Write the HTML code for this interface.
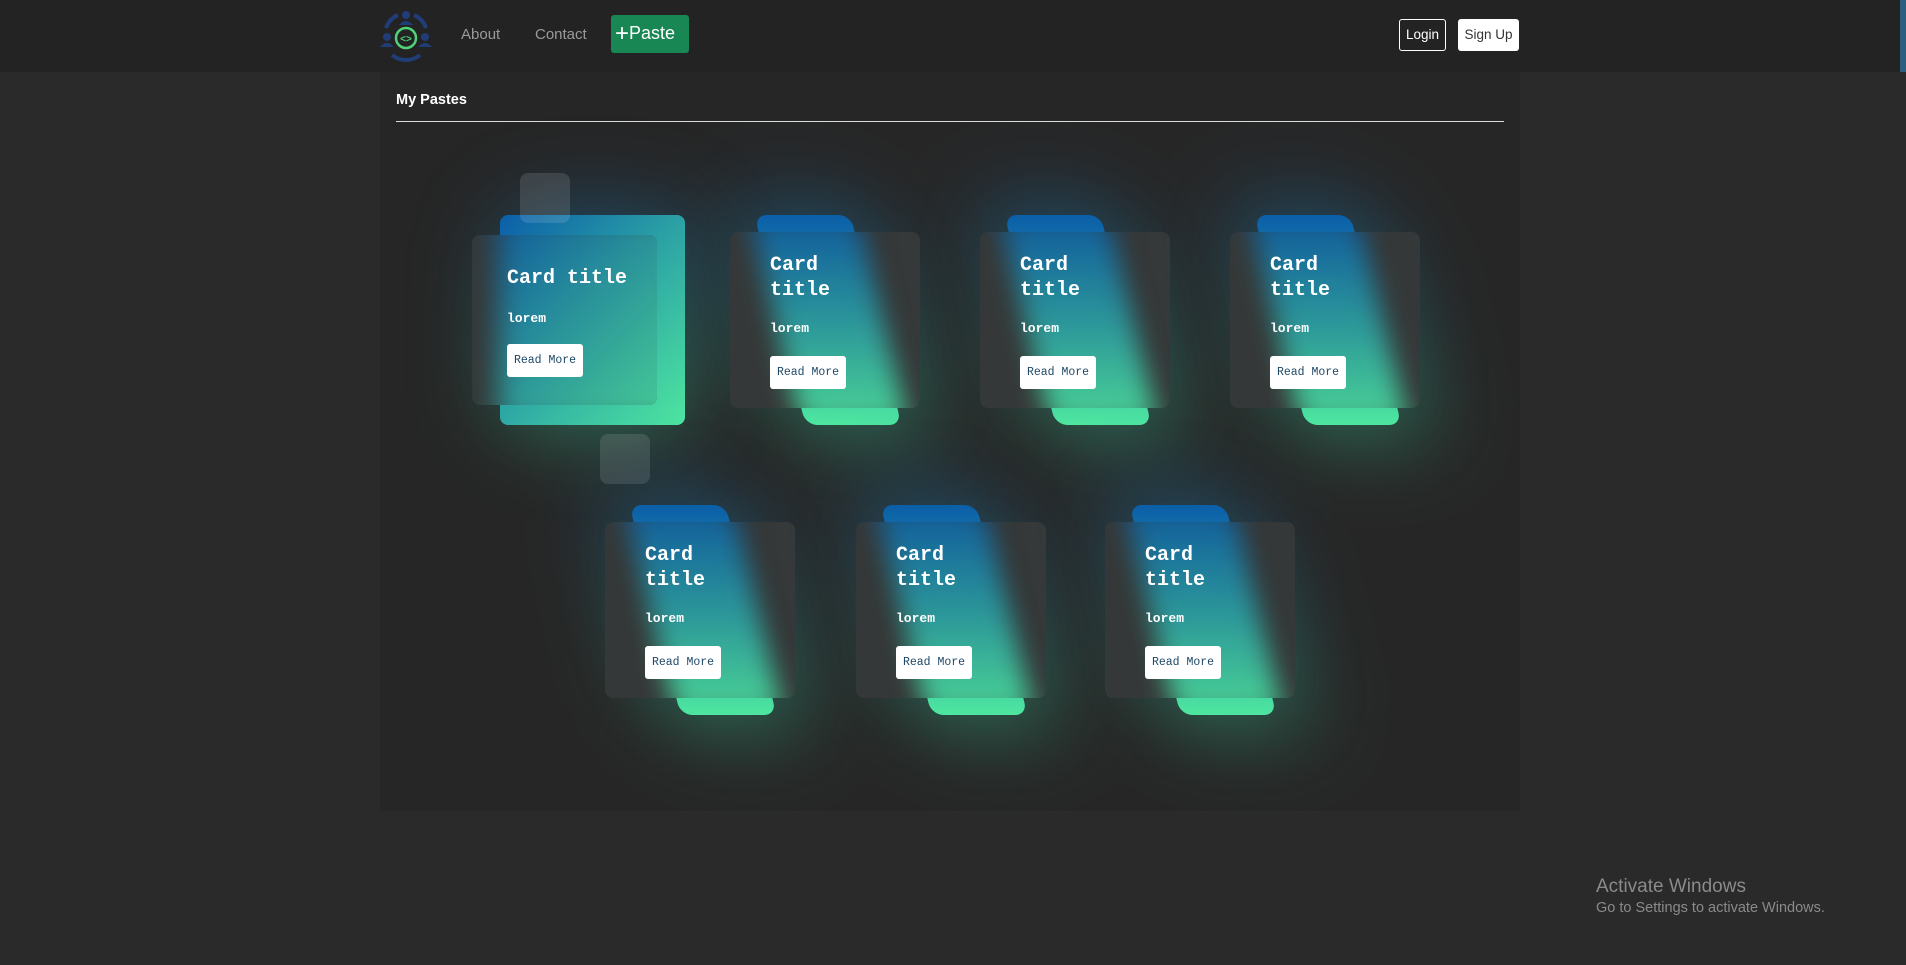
<!DOCTYPE html>
<html><head><meta charset="utf-8">
<style>
*{margin:0;padding:0;box-sizing:border-box}
html,body{width:1906px;height:965px;overflow:hidden;background:#2a2a2a;font-family:"Liberation Sans",sans-serif}
.hdr{position:absolute;left:0;top:0;width:1906px;height:72px;background:#232323}
.main{position:absolute;left:380px;top:72px;width:1140px;height:739px;background:#262626}
.nav{position:absolute;top:26px;color:#9a9a9a;font-size:15px}
.paste{position:absolute;left:611px;top:15px;width:78px;height:38px;background:#198754;border-radius:3px;color:#fff;font-size:18px;line-height:36px;padding-left:4px}
.login{position:absolute;left:1399px;top:19px;width:47px;height:32px;border:1px solid #fff;border-radius:3px;color:#fff;font-size:13.5px;line-height:30px;text-align:center}
.signup{position:absolute;left:1458px;top:19px;width:61px;height:32px;background:#fff;border-radius:3px;color:#333;font-size:13.5px;line-height:32px;text-align:center}
.title{position:absolute;left:396px;top:92px;color:#fff;font-weight:bold;font-size:14.5px}
.hr{position:absolute;left:396px;top:121px;width:1108px;height:1px;background:#ddd}
.sq{position:absolute;width:50px;height:50px;border-radius:8px;background:rgba(255,255,255,0.12)}
.back,.bb{position:absolute;width:96px;height:210px;border-radius:12px;transform:skewX(13.6deg);background:linear-gradient(180deg,#0b5ea8 0%,#2a9fa5 50%,#4ee6a0 100%)}
.bb{left:45px;top:-17px;width:108px;filter:blur(13px);opacity:.9}
.glow{position:absolute;width:160px;height:240px;border-radius:50px;filter:blur(40px);background:linear-gradient(180deg,rgba(20,100,170,.45),rgba(60,220,150,.4));transform:skewX(13deg)}
.glass{position:absolute;width:190px;height:176px;border-radius:8px;background:#353838;overflow:hidden;font-family:"Liberation Mono",monospace;color:#fff}
.in{position:absolute;left:40px;top:21px}
.glass h3{font-size:20px;line-height:25px;width:80px;font-weight:bold}
.glass p{font-size:13px;font-weight:bold;margin-top:18px}
.btn{display:inline-block;margin-top:20px;width:76px;height:33px;background:#fff;border-radius:3px;color:#1d4866;font-size:11.5px;line-height:33px;text-align:center;font-weight:normal}
.aw{position:absolute;left:1596px;top:876px;color:#8a8a8a;font-family:"Liberation Sans",sans-serif}
</style></head><body>
<div class="hdr"></div>
<div class="main"></div>
<div style="position:absolute;left:1900px;top:0;width:6px;height:72px;background:#2a5f80"></div>
<svg style="position:absolute;left:378px;top:8px" width="56" height="56" viewBox="0 0 56 56">
<g fill="none" stroke="#213d78" stroke-width="4">
<path d="M8 20 A22 22 0 0 1 20 7"/><path d="M36 7 A22 22 0 0 1 48 20"/><path d="M14 47 A22 22 0 0 0 42 47"/></g>
<g fill="#213d78"><circle cx="28" cy="7" r="4"/><path d="M21 17 q7 -8 14 0z"/><circle cx="9" cy="29" r="4"/><path d="M2 39 q7 -8 14 0z"/><circle cx="47" cy="29" r="4"/><path d="M40 39 q7 -8 14 0z"/></g>
<circle cx="28" cy="30" r="10" fill="none" stroke="#4fd37a" stroke-width="2.5"/>
<text x="28" y="34" text-anchor="middle" fill="#4fd37a" font-size="10" font-weight="bold" font-family="Liberation Sans">&lt;&gt;</text>
</svg>
<div class="nav" style="left:461px">About</div>
<div class="nav" style="left:535px">Contact</div>
<div class="paste"><span style="font-size:24px;vertical-align:-2px">+</span>Paste</div>
<div class="login">Login</div>
<div class="signup">Sign Up</div>
<div class="title">My Pastes</div>
<div class="hr"></div>

<div class="glow" style="left:495px;top:205px;width:200px;height:230px;transform:none"></div>
<div style="position:absolute;left:500px;top:215px;width:185px;height:210px;border-radius:8px;background:linear-gradient(135deg,#0b5ea8 0%,#2a9fa5 45%,#4ee6a0 100%)"></div>
<div class="sq" style="left:520px;top:173px"></div>
<div class="sq" style="left:600px;top:434px"></div>
<div class="glass" style="left:472px;top:235px;width:185px;height:170px">
<div style="position:absolute;left:26px;top:-20px;width:190px;height:210px;border-radius:8px;filter:blur(14px);background:linear-gradient(135deg,#0b5ea8 0%,#2a9fa5 45%,#4ee6a0 100%);opacity:.9"></div>
<div class="in" style="left:35px;top:31px"><h3 style="width:auto">Card title</h3><p style="margin-top:20px">lorem</p><div class="btn" style="margin-top:18px">Read More</div></div></div>

<div class="glow" style="left:750px;top:200px"></div>
<div class="back" style="left:780px;top:215px"></div>
<div class="glass" style="left:730px;top:232px"><div class="bb"></div><div class="in"><h3>Card title</h3><p>lorem</p><div class="btn">Read More</div></div></div>

<div class="glow" style="left:1000px;top:200px"></div>
<div class="back" style="left:1030px;top:215px"></div>
<div class="glass" style="left:980px;top:232px"><div class="bb"></div><div class="in"><h3>Card title</h3><p>lorem</p><div class="btn">Read More</div></div></div>

<div class="glow" style="left:1250px;top:200px"></div>
<div class="back" style="left:1280px;top:215px"></div>
<div class="glass" style="left:1230px;top:232px"><div class="bb"></div><div class="in"><h3>Card title</h3><p>lorem</p><div class="btn">Read More</div></div></div>

<div class="glow" style="left:625px;top:490px"></div>
<div class="back" style="left:655px;top:505px"></div>
<div class="glass" style="left:605px;top:522px"><div class="bb"></div><div class="in"><h3>Card title</h3><p>lorem</p><div class="btn">Read More</div></div></div>

<div class="glow" style="left:876px;top:490px"></div>
<div class="back" style="left:906px;top:505px"></div>
<div class="glass" style="left:856px;top:522px"><div class="bb"></div><div class="in"><h3>Card title</h3><p>lorem</p><div class="btn">Read More</div></div></div>

<div class="glow" style="left:1125px;top:490px"></div>
<div class="back" style="left:1155px;top:505px"></div>
<div class="glass" style="left:1105px;top:522px"><div class="bb"></div><div class="in"><h3>Card title</h3><p>lorem</p><div class="btn">Read More</div></div></div>

<div class="aw"><div style="font-size:19px">Activate Windows</div><div style="font-size:14.5px;margin-top:2px">Go to Settings to activate Windows.</div></div>
</body></html>
